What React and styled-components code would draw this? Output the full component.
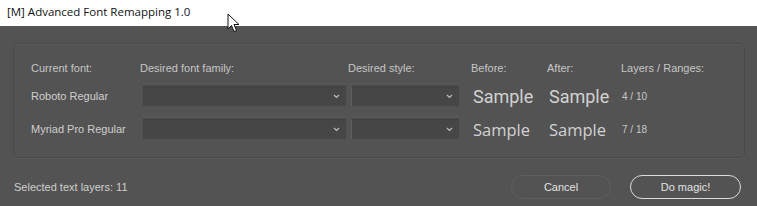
import React from "react";
import styled, { createGlobalStyle } from "styled-components";

const Global = createGlobalStyle`
  html, body { margin: 0; padding: 0; background: #535353; }
  #root { width: 757px; height: 206px; overflow: hidden; }
`;

const Window = styled.div`
  position: relative;
  width: 757px;
  height: 206px;
  display: flex;
  flex-direction: column;
  font-family: "Liberation Sans", Arial, sans-serif;
`;

const TitleBar = styled.div`
  height: 26px;
  flex: none;
  background: #ffffff;
  display: flex;
  align-items: center;
  padding: 0 0 3px 7px;
  box-sizing: border-box;
  font-family: "Open Sans", "Noto Sans", sans-serif;
  font-size: 11.5px;
  color: #111;
`;

const Cursor = styled.svg`
  position: absolute;
  left: 227px;
  top: 13px;
`;

const Body = styled.div`
  flex: 1;
  background: #535353;
  padding: 17px 12px 0 13px;
  display: flex;
  flex-direction: column;
`;

const Panel = styled.div`
  height: 115px;
  box-sizing: border-box;
  border: 1px solid #4a4a4a;
  border-radius: 5px;
  box-shadow: inset 0 1px 0 #5a5a5a, 0 1px 0 #5c5c5c;
  padding: 17px 0 0 17px;
  display: grid;
  grid-template-columns: 109px 208px 123px 76px 74px 1fr;
  grid-template-rows: 14px 20px 20px;
  row-gap: 11px;
  align-items: center;
`;

const Head = styled.div`
  font-size: 11px;
  color: #c6c6c6;
  white-space: nowrap;
`;

const FontName = styled.div`
  font-size: 11px;
  color: #cfcfcf;
  white-space: nowrap;
  margin-top: ${(p) => p.$shift || 0}px;
`;

const Select = styled.div`
  margin-left: 3px;
  width: ${(p) => p.$w}px;
  height: 20px;
  box-sizing: border-box;
  background: #464646;
  border-top: 1px solid #3f3f3f;
  border-left: 1px solid ${(p) => (p.$sep ? "#5e5e5e" : "#444")};
  box-shadow: 0 -2px 0 #505050, 0 -3px 0 #5b5b5b;
  display: flex;
  align-items: center;
  justify-content: flex-end;
  padding-right: 6px;
  margin-top: ${(p) => p.$shift || 0}px;
`;

const Sample = styled.div`
  font-family: ${(p) => p.$font};
  font-size: ${(p) => p.$size}px;
  color: #d2d2d2;
  margin-left: 2px;
  white-space: nowrap;
  margin-top: ${(p) => p.$shift || 0}px;
`;

const Count = styled.div`
  font-size: 10px;
  color: #c8c8c8;
  margin-left: 1px;
  margin-top: ${(p) => p.$shift || 0}px;
`;

const Footer = styled.div`
  display: flex;
  align-items: center;
  padding: 17px 4px 0 1px;
`;

const Status = styled.div`
  font-size: 11px;
  color: #cfcfcf;
  flex: 1;
`;

const Button = styled.div`
  height: 24px;
  width: ${(p) => p.$w}px;
  box-sizing: border-box;
  border-radius: 12px;
  border: ${(p) => (p.$primary ? "1.5px solid #dcdcdc" : "1.5px solid #5f5f5f")};
  display: flex;
  align-items: center;
  justify-content: center;
  font-size: 11px;
  color: #e2e2e2;
  margin-left: ${(p) => p.$ml}px;
`;

const Chevron = () => (
  <svg width="7" height="5" viewBox="0 0 7 5">
    <path d="M1 1 L3.5 3.5 L6 1" fill="none" stroke="#bdbdbd" strokeWidth="1.2" />
  </svg>
);

const rows = [
  { name: "Roboto Regular", font: "Roboto, sans-serif", size: 18, count: "4 / 10", shift: 0 },
  { name: "Myriad Pro Regular", font: "'Open Sans', 'Noto Sans', sans-serif", size: 16.5, count: "7 / 18", shift: 4 },
];

export default function App() {
  return (
    <>
      <Global />
      <Window>
        <TitleBar>[M] Advanced Font Remapping 1.0</TitleBar>
        <Cursor width="14" height="20" viewBox="0 0 14 20">
          <path d="M1 1 L1 16 L4.5 12.5 L7 18.5 L9.5 17.5 L7 11.5 L12 11.5 Z" fill="#fff" stroke="#111" strokeWidth="1" strokeLinejoin="round" />
        </Cursor>
        <Body>
          <Panel>
            <Head>Current font:</Head>
            <Head>Desired font family:</Head>
            <Head>Desired style:</Head>
            <Head>Before:</Head>
            <Head>After:</Head>
            <Head>Layers / Ranges:</Head>
            {rows.map((r) => (
              <React.Fragment key={r.name}>
                <FontName $shift={r.shift}>{r.name}</FontName>
                <Select $w={203} $shift={r.shift}><Chevron /></Select>
                <Select $w={108} $sep $shift={r.shift}><Chevron /></Select>
                <Sample $font={r.font} $size={r.size} $shift={r.shift}>Sample</Sample>
                <Sample $font={r.font} $size={r.size} $shift={r.shift}>Sample</Sample>
                <Count $shift={r.shift}>{r.count}</Count>
              </React.Fragment>
            ))}
          </Panel>
          <Footer>
            <Status>Selected text layers: 11</Status>
            <Button $w={100}>Cancel</Button>
            <Button $w={111} $ml={19} $primary>Do magic!</Button>
          </Footer>
        </Body>
      </Window>
    </>
  );
}
